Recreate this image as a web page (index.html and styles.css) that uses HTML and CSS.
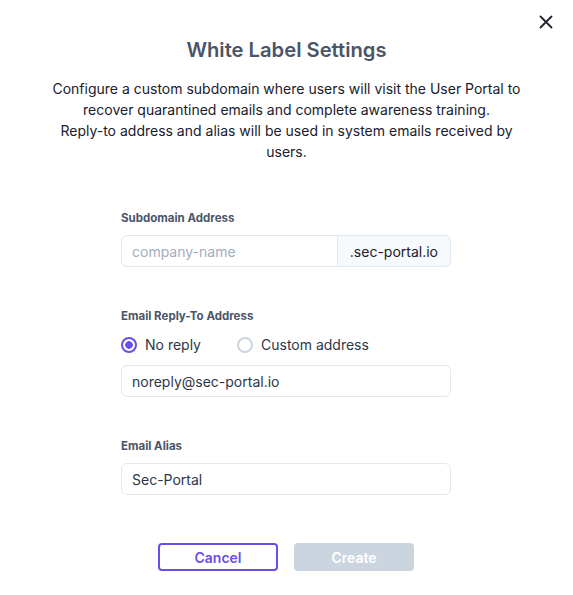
FILE: index.html
```html
<!DOCTYPE html>
<html>
<head>
<meta charset="utf-8">
<link rel="stylesheet" href="styles.css">
</head>
<body>
<div class="modal">
  <button class="close" aria-label="Close">
    <svg width="14" height="14" viewBox="0 0 14 14"><path d="M1.5 1.5 L12.5 12.5 M12.5 1.5 L1.5 12.5" stroke="#1f2330" stroke-width="1.8" stroke-linecap="round"/></svg>
  </button>
  <h1 class="title">White Label Settings</h1>
  <p class="desc">Configure a custom subdomain where users will visit the User Portal to recover quarantined emails and complete awareness training.<br>Reply-to address and alias will be used in system emails received by users.</p>
  <form class="form">
    <div class="field">
      <label class="label">Subdomain Address</label>
      <div class="group">
        <input class="input input-left" placeholder="company-name">
        <span class="addon">.sec-portal.io</span>
      </div>
    </div>
    <div class="field field-reply">
      <label class="label">Email Reply-To Address</label>
      <div class="radios">
        <label class="radio"><span class="dot dot-on"></span>No reply</label>
        <label class="radio"><span class="dot"></span>Custom address</label>
      </div>
      <input class="input" value="noreply@sec-portal.io">
    </div>
    <div class="field field-alias">
      <label class="label">Email Alias</label>
      <input class="input" value="Sec-Portal">
    </div>
    <div class="actions">
      <button type="button" class="btn btn-cancel">Cancel</button>
      <button type="button" class="btn btn-create" disabled>Create</button>
    </div>
  </form>
</div>
</body>
</html>
```

FILE: styles.css
```css
* { box-sizing: border-box; }
html, body { margin: 0; padding: 0; background: #fff; }
body { font-family: Inter, "Noto Sans", sans-serif; color: #1a202c; }
.modal { position: relative; width: 573px; height: 595px; padding-top: 36px; }
.close { position: absolute; top: 15px; right: 20px; border: 0; background: none; padding: 0; width: 14px; height: 14px; cursor: pointer; }
.close svg { display: block; }
.title { margin: 0; text-align: center; font-size: 20.2px; font-weight: 600; color: #4a5568; line-height: 28px; }
.desc { margin: 14px 0 0; text-align: center; font-size: 14px; line-height: 21px; color: #1a202c; padding: 0 40px; }
.form { width: 330px; margin: 47px 0 0 121px; }
.label { display: block; font-size: 11.5px; font-weight: 700; color: #4a5568; line-height: 18px; }
.field-reply { margin-top: 40px; }
.field-alias { margin-top: 40px; }
.input { display: block; width: 100%; height: 32px; border: 1px solid #e2e8f0; border-radius: 6px; padding: 0 10px; font-family: inherit; font-size: 14px; color: #2d3748; background: #fff; outline: none; }
.input::placeholder { color: #a0aec0; }
.field .input, .field .group { margin-top: 8px; }
.group { display: flex; }
.group .input { margin-top: 0; }
.input-left { flex: 1; border-radius: 6px 0 0 6px; }
.addon { display: flex; align-items: center; padding: 0 12px; height: 32px; border: 1px solid #e2e8f0; border-left: 0; border-radius: 0 6px 6px 0; background: #f7fafc; font-size: 14px; color: #1a202c; }
.radios { display: flex; gap: 36px; margin-top: 10px; }
.radios + .input { margin-top: 10px; }
.radio { display: flex; align-items: center; gap: 8px; font-size: 14px; color: #2d3748; line-height: 20px; }
.dot { width: 16px; height: 16px; border-radius: 50%; border: 2px solid #cbd5e0; background: #fff; }
.dot-on { border-color: #6b4ee6; background: radial-gradient(circle, #6b4ee6 0 3.5px, #fff 4px); }
.actions { display: flex; justify-content: center; gap: 16px; margin-top: 48px; }
.btn { width: 120px; height: 28px; border-radius: 4px; font-family: inherit; font-size: 14px; font-weight: 600; }
.btn-cancel { background: #fff; border: 2px solid #6b4ee6; color: #6b4ee6; }
.btn-create { background: #cbd5e0; border: 0; color: #fff; }
```
